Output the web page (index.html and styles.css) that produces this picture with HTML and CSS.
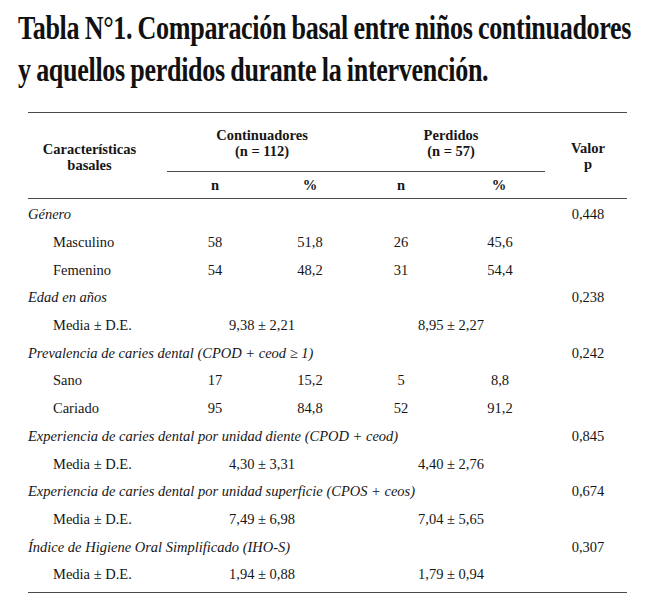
FILE: index.html
```html
<!DOCTYPE html>
<html lang="es">
<head>
<meta charset="utf-8">
<title>Tabla N°1</title>
<link rel="stylesheet" href="styles.css">
</head>
<body>
<div class="page">
  <h1 class="title"><span class="title-line">Tabla N°1. Comparación basal entre niños continuadores</span><span class="title-line">y aquellos perdidos durante la intervención.</span></h1>

  <div class="table">
    <div class="thead">
      <div class="h-label">Características<br>basales</div>
      <div class="h-group g-cont">Continuadores<br>(n = 112)</div>
      <div class="h-group g-perd">Perdidos<br>(n = 57)</div>
      <div class="h-valor">Valor<br>p</div>
      <div class="h-sub c2">n</div>
      <div class="h-sub c3">%</div>
      <div class="h-sub c4">n</div>
      <div class="h-sub c5">%</div>
    </div>

    <div class="tbody">
      <div class="row">
        <div class="cat">Género</div><div class="p">0,448</div>
      </div>
      <div class="row">
        <div class="sub">Masculino</div><div class="num">58</div><div class="num">51,8</div><div class="num">26</div><div class="num">45,6</div><div class="p"></div>
      </div>
      <div class="row">
        <div class="sub">Femenino</div><div class="num">54</div><div class="num">48,2</div><div class="num">31</div><div class="num">54,4</div><div class="p"></div>
      </div>
      <div class="row">
        <div class="cat">Edad en años</div><div class="p">0,238</div>
      </div>
      <div class="row">
        <div class="sub">Media ± D.E.</div><div class="mean">9,38 ± 2,21</div><div class="mean">8,95 ± 2,27</div><div class="p"></div>
      </div>
      <div class="row">
        <div class="cat">Prevalencia de caries dental (CPOD + ceod ≥ 1)</div><div class="p">0,242</div>
      </div>
      <div class="row">
        <div class="sub">Sano</div><div class="num">17</div><div class="num">15,2</div><div class="num">5</div><div class="num">8,8</div><div class="p"></div>
      </div>
      <div class="row">
        <div class="sub">Cariado</div><div class="num">95</div><div class="num">84,8</div><div class="num">52</div><div class="num">91,2</div><div class="p"></div>
      </div>
      <div class="row">
        <div class="cat">Experiencia de caries dental por unidad diente (CPOD + ceod)</div><div class="p">0,845</div>
      </div>
      <div class="row">
        <div class="sub">Media ± D.E.</div><div class="mean">4,30 ± 3,31</div><div class="mean">4,40 ± 2,76</div><div class="p"></div>
      </div>
      <div class="row">
        <div class="cat">Experiencia de caries dental por unidad superficie (CPOS + ceos)</div><div class="p">0,674</div>
      </div>
      <div class="row">
        <div class="sub">Media ± D.E.</div><div class="mean">7,49 ± 6,98</div><div class="mean">7,04 ± 5,65</div><div class="p"></div>
      </div>
      <div class="row">
        <div class="cat">Índice de Higiene Oral Simplificado (IHO-S)</div><div class="p">0,307</div>
      </div>
      <div class="row last">
        <div class="sub">Media ± D.E.</div><div class="mean">1,94 ± 0,88</div><div class="mean">1,79 ± 0,94</div><div class="p"></div>
      </div>
    </div>
  </div>
</div>
</body>
</html>
```

FILE: styles.css
```css
* { box-sizing: border-box; }

html, body {
  margin: 0;
  padding: 0;
  background: #ffffff;
}

body {
  font-family: "Liberation Serif", "Times New Roman", serif;
  color: #161616;
}

.page {
  width: 650px;
  height: 607px;
  padding: 7px 0 0 0;
  overflow: hidden;
}

.title {
  margin: 0 0 0 18px;
  font-size: 33px;
  font-weight: bold;
  line-height: 42px;
  color: #111;
  letter-spacing: -0.4px;
  word-spacing: -1px;
}

.title-line {
  display: block;
  white-space: nowrap;
  transform: scaleX(0.79);
  transform-origin: left center;
}

.table {
  margin: 21px 0 0 28px;
  width: 599px;
  font-size: 14.5px;
}

.thead {
  display: grid;
  grid-template-columns: 139px 96px 94px 94px 94px 82px;
  grid-template-rows: auto 26px;
  border-top: 1.5px solid #4a4a4a;
  border-bottom: 1.5px solid #4a4a4a;
  font-weight: bold;
  line-height: 16px;
  text-align: center;
}

.h-label {
  grid-column: 1;
  grid-row: 1 / span 2;
  align-self: center;
  padding-right: 16px;
  padding-top: 3px;
}

.h-group {
  grid-row: 1;
  padding: 14px 0 12px;
  border-bottom: 1.5px solid #4a4a4a;
}

.g-cont { grid-column: 2 / span 2; }
.g-perd { grid-column: 4 / span 2; }

.h-valor {
  grid-column: 6;
  grid-row: 1 / span 2;
  align-self: center;
  padding-left: 4px;
}

.h-sub {
  grid-row: 2;
  align-self: center;
}
.c2 { grid-column: 2; }
.c3 { grid-column: 3; }
.c4 { grid-column: 4; padding-right: 6px; }
.c5 { grid-column: 5; padding-left: 2px; }

.tbody {
  border-bottom: 1.5px solid #4a4a4a;
  padding-top: 1.5px;
  padding-bottom: 4px;
}

.row {
  display: grid;
  grid-template-columns: 139px 96px 94px 94px 94px 82px;
  height: 27.7px;
  align-items: center;
  line-height: 16px;
}

.cat {
  grid-column: 1 / span 5;
  font-style: italic;
  white-space: nowrap;
}

.sub {
  grid-column: 1;
  padding-left: 25px;
  white-space: nowrap;
}

.num { text-align: center; }
.row .num:nth-child(4) { padding-right: 6px; }
.row .num:nth-child(5) { padding-left: 4px; }

.mean {
  grid-column: span 2;
  text-align: center;
  white-space: nowrap;
}

.p {
  grid-column: 6;
  text-align: center;
  padding-left: 4px;
}
```
